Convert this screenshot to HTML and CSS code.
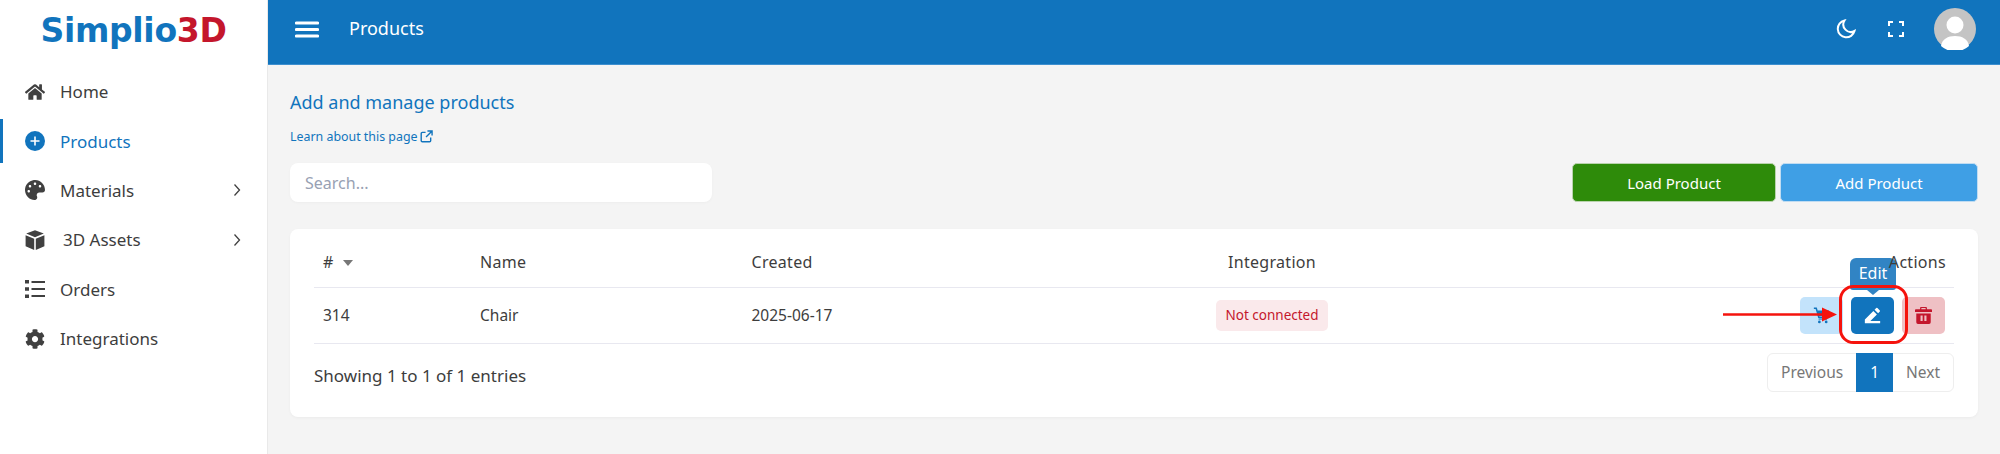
FILE: index.html
```html
<!DOCTYPE html>
<html lang="en">
<head>
<meta charset="utf-8">
<title>Products</title>
<link rel="stylesheet" href="styles.css">
</head>
<body>
<div class="app">
  <aside class="sidebar">
    <div class="logo"><span class="logo-blue">Simplio</span><span class="logo-red">3D</span></div>
    <nav class="nav">
      <a class="nav-item"><svg class="nav-icon" viewBox="0 0 576 512"><path d="M280.37 148.26L96 300.11V464a16 16 0 0 0 16 16l112.06-.29a16 16 0 0 0 15.92-16V368a16 16 0 0 1 16-16h64a16 16 0 0 1 16 16v95.64a16 16 0 0 0 16 16.05L464 480a16 16 0 0 0 16-16V300L295.67 148.26a12.19 12.19 0 0 0-15.3 0zM571.6 251.47L488 182.56V44.05a12 12 0 0 0-12-12h-56a12 12 0 0 0-12 12v72.61L318.47 43a48 48 0 0 0-61 0L4.34 251.47a12 12 0 0 0-1.6 16.9l25.5 31A12 12 0 0 0 45.15 301l235.22-193.74a12.19 12.19 0 0 1 15.3 0L530.9 301a12 12 0 0 0 16.9-1.6l25.5-31a12 12 0 0 0-1.7-16.93z"/></svg><span class="nav-label">Home</span></a>
      <a class="nav-item active"><svg class="nav-icon" viewBox="0 0 20 20"><circle cx="10" cy="10" r="10"/><path d="M10 5.5v9M5.5 10h9" stroke="#fff" stroke-width="1.6" fill="none"/></svg><span class="nav-label">Products</span></a>
      <a class="nav-item"><svg class="nav-icon" viewBox="0 0 512 512"><path d="M204.3 5C104.9 24.4 24.8 104.3 5.2 203.4c-37 187 131.7 326.4 258.8 306.7 41.2-6.4 61.4-54.6 42.5-91.7-23.1-45.4 9.9-98.4 60.9-98.4h79.7c35.8 0 64.8-29.6 64.9-65.3C511.5 97.1 368.1-26.9 204.3 5zM96 320c-17.7 0-32-14.3-32-32s14.3-32 32-32 32 14.3 32 32-14.3 32-32 32zm32-128c-17.7 0-32-14.3-32-32s14.3-32 32-32 32 14.3 32 32-14.3 32-32 32zm128-64c-17.7 0-32-14.3-32-32s14.3-32 32-32 32 14.3 32 32-14.3 32-32 32zm128 64c-17.7 0-32-14.3-32-32s14.3-32 32-32 32 14.3 32 32-14.3 32-32 32z"/></svg><span class="nav-label">Materials</span><svg class="chev" viewBox="0 0 8 14"><path d="M1.5 1.5L6.5 7l-5 5.5"/></svg></a>
      <a class="nav-item"><svg class="nav-icon" viewBox="0 0 20 20"><path d="M10 .2l8.800 3.300L10 7.300 1.200 3.500zM.6 5.200l8.600 3.600V20L.6 16.200zM19.400 5.200l-8.600 3.600V20l8.600-3.800z"/></svg><span class="nav-label assets">3D Assets</span><svg class="chev" viewBox="0 0 8 14"><path d="M1.500 1.500L6.500 7l-5 5.500"/></svg></a>
      <a class="nav-item"><svg class="nav-icon" viewBox="0 0 20 20"><path d="M0 1h4v3.500H0zM0 8.200h4v3.500H0zM0 15.500h4V19H0zM6.500 2h13.500v2H6.500zM6.500 9h13.500v2H6.500zM6.500 16h13.500v2H6.500z"/></svg><span class="nav-label">Orders</span></a>
      <a class="nav-item"><svg class="nav-icon" viewBox="0 0 512 512"><path d="M487.4 315.7l-42.6-24.6c4.3-23.2 4.3-47 0-70.2l42.6-24.6c4.9-2.8 7.1-8.6 5.5-14-11.1-35.6-30-67.8-54.7-94.6-3.8-4.1-10-5.1-14.8-2.3L380.8 110c-17.9-15.4-38.5-27.3-60.8-35.1V25.8c0-5.6-3.9-10.5-9.4-11.7-36.7-8.2-74.3-7.8-109.2 0-5.500 1.200-9.400 6.100-9.400 11.700V75c-22.200 7.900-42.800 19.800-60.800 35.100L88.700 85.500c-4.900-2.800-11-1.900-14.800 2.300-24.700 26.700-43.600 58.900-54.700 94.600-1.700 5.400.6 11.200 5.500 14L67.300 221c-4.300 23.200-4.300 47 0 70.200l-42.600 24.600c-4.900 2.800-7.100 8.600-5.500 14 11.100 35.600 30 67.800 54.700 94.600 3.800 4.100 10 5.100 14.800 2.300l42.600-24.600c17.900 15.400 38.500 27.300 60.800 35.100v49.200c0 5.600 3.900 10.500 9.400 11.700 36.700 8.200 74.300 7.800 109.200 0 5.500-1.200 9.400-6.100 9.400-11.700v-49.200c22.200-7.900 42.800-19.800 60.800-35.100l42.600 24.600c4.900 2.800 11 1.900 14.800-2.300 24.700-26.700 43.600-58.900 54.700-94.600 1.500-5.500-.7-11.300-5.600-14.100zM256 336c-44.100 0-80-35.900-80-80s35.900-80 80-80 80 35.900 80 80-35.900 80-80 80z"/></svg><span class="nav-label">Integrations</span></a>
    </nav>
  </aside>
  <div class="main">
    <header class="topbar">
      <svg class="burger" viewBox="0 0 24 17"><path d="M1.500 2h21M1.500 8.500h21M1.500 15h21"/></svg>
      <span class="topbar-title">Products</span>
      <div class="topbar-tools">
        <svg class="moon" viewBox="0 0 20 20"><path d="M8.500 1.500a8.500 8.500 0 1 0 10 10.500 7.500 7.500 0 0 1-10-10.500z"/></svg>
        <svg class="expand" viewBox="0 0 16 16"><path d="M1 5V1h4M11 1h4v4M15 11v4h-4M5 15H1v-4"/></svg>
        <svg class="avatar" viewBox="0 0 42 42"><circle cx="21" cy="21" r="21" fill="#c4c4c4"/><circle cx="21" cy="17" r="8.500" fill="#fff"/><path d="M7 38c1-7 7-10 14-10s13 3 14 10a21 21 0 0 1-28 0z" fill="#fff"/></svg>
      </div>
    </header>
    <main class="content">
      <h1 class="page-title">Add and manage products</h1>
      <a class="learn">Learn about this page <svg class="ext" viewBox="0 0 14 14"><path d="M6 2.500H2.500a1.200 1.200 0 0 0-1.200 1.200v7.800a1.200 1.200 0 0 0 1.200 1.200h7.800a1.200 1.200 0 0 0 1.200-1.200V8M8 1h5v5M13 1L6.500 7.500"/></svg></a>
      <div class="toolbar">
        <input class="search" type="text" placeholder="Search...">
        <div class="toolbar-actions">
          <button class="btn btn-load">Load Product</button>
          <button class="btn btn-add">Add Product</button>
        </div>
      </div>
      <section class="card">
        <table class="table">
          <colgroup><col class="c1"><col class="c2"><col class="c3"><col class="c4"><col class="c5"></colgroup>
          <thead>
            <tr>
              <th><span class="hash">#</span><span class="sort"></span></th>
              <th>Name</th>
              <th>Created</th>
              <th class="center">Integration</th>
              <th class="right"><span class="actions-label">Actions</span></th>
            </tr>
          </thead>
          <tbody>
            <tr>
              <td>314</td>
              <td>Chair</td>
              <td>2025-06-17</td>
              <td class="center"><span class="badge">Not connected</span></td>
              <td class="right">
                <div class="actions">
                  <button class="act act-cart"><svg viewBox="0 0 20 20"><path d="M1 1.500h2.800l3 10.500h9.500" fill="none" stroke="currentColor" stroke-width="1.800"/><path d="M5 4h14l-1.800 6.500H6.800z"/><path d="M6.500 13.500h10v1.300h-10z"/><circle cx="7.500" cy="17.500" r="1.600"/><circle cx="15.500" cy="17.500" r="1.600"/></svg></button>
                  <button class="act act-edit"><svg viewBox="0 0 20 20"><path d="M1 19v-4.200L11 4.600l4.200 4.200L7.500 16.500H19V19zM12.400 3.200l2-2a1 1 0 0 1 1.400 0l2.800 2.800a1 1 0 0 1 0 1.400l-2 2z"/></svg></button>
                  <button class="act act-del"><svg viewBox="0 0 20 20"><path d="M7 0h6a1 1 0 0 1 1 1v1.500h5a1 1 0 0 1 1 1V6H0V3.500a1 1 0 0 1 1-1h5V1a1 1 0 0 1 1-1zm.500 1.300v1.200h5V1.300zM1.500 7.500h17V18a2 2 0 0 1-2 2h-13a2 2 0 0 1-2-2zM6.500 10v6.500h2.500V10zm4.500 0v6.500h2.500V10z" fill-rule="evenodd"/></svg></button>
                  <div class="tooltip">Edit</div>
                </div>
              </td>
            </tr>
          </tbody>
        </table>
        <div class="table-foot">
          <span class="entries">Showing 1 to 1 of 1 entries</span>
          <div class="pager">
            <span class="page-link">Previous</span>
            <span class="page-link current">1</span>
            <span class="page-link">Next</span>
          </div>
        </div>
      </section>
    </main>
  </div>
</div>
<svg class="annotation" viewBox="0 0 2000 454">
  <rect x="1840.500" y="286.500" width="66" height="56" rx="13" fill="none" stroke="#f5130d" stroke-width="3"/>
  <path d="M1723 314.500h100" stroke="#f5130d" stroke-width="2.500" fill="none"/>
  <path d="M1822 307.500v14l15-7z" fill="#f5130d"/>
</svg>
</body>
</html>
```
FILE: styles.css
```css
* { box-sizing: border-box; }
html, body { margin: 0; height: 100%; }
body {
  font-family: "Noto Sans", "Open Sans", sans-serif;
  color: #3d3d3d;
  background: #f4f4f4;
  overflow: hidden;
  position: relative;
}
.app { display: flex; height: 454px; }

.sidebar {
  width: 268px;
  flex: none;
  background: #fff;
  border-right: 1px solid #e9e9e9;
}
.logo {
  height: 64px;
  padding-top: 11px;
  text-align: center;
  font-family: "DejaVu Sans", sans-serif;
  font-weight: 700;
  font-size: 33px;
  line-height: 40px;
  letter-spacing: -0.3px;
}
.logo-blue { color: #1174bd; }
.logo-red { color: #c4162c; }

.nav { padding-top: 3px; display: flex; flex-direction: column; }
.nav-item {
  height: 49.400px;
  display: flex;
  align-items: center;
  padding: 0 25px;
  font-size: 17px;
  color: #3d3d3d;
  position: relative;
}
.nav-icon { width: 20px; height: 20px; fill: #404040; flex: none; }
.nav-label { margin-left: 15px; flex: 1; }
.nav-label.assets { margin-left: 18px; }
.nav-item.active { color: #1174bd; }
.nav-item.active .nav-icon { fill: #1174bd; }
.nav-item.active::before {
  content: "";
  position: absolute;
  left: 0;
  top: 3px;
  bottom: 3px;
  width: 3px;
  background: #1174bd;
}
.chev { width: 8px; height: 14px; margin-right: 1px; fill: none; stroke: #404040; stroke-width: 1.300; }

.main { flex: 1; min-width: 0; display: flex; flex-direction: column; }
.topbar {
  height: 65px;
  flex: none;
  background: #1174bd;
  border-bottom: 1px solid #3d8fcf;
  display: flex;
  align-items: center;
  padding: 0 24px 6px 27px;
  color: #fff;
}
.burger { width: 24px; height: 17px; fill: none; stroke: #fff; stroke-width: 3.200; stroke-linecap: round; }
.topbar-title { margin-left: 30px; font-size: 18px; line-height: 20px; margin-top: -2px; }
.topbar-tools { margin-left: auto; display: flex; align-items: center; }
.moon { width: 20px; height: 20px; fill: none; stroke: #fff; stroke-width: 2; }
.expand { width: 16px; height: 16px; margin-left: 32px; fill: none; stroke: #fff; stroke-width: 2; }
.avatar { width: 42px; height: 42px; margin-left: 30px; }

.content { flex: 1; padding: 25px 22px 0; }
.page-title { margin: 0; font-size: 18px; font-weight: 400; line-height: 24px; color: #1174bd; }
.learn {
  display: flex;
  align-items: center;
  margin-top: 12px;
  height: 20px;
  font-size: 12.400px;
  color: #1174bd;
}
.ext { width: 13px; height: 13px; margin-left: 2px; fill: none; stroke: #1174bd; stroke-width: 1.500; }

.toolbar { display: flex; justify-content: space-between; align-items: center; margin-top: 17px; }
.search {
  width: 422px;
  height: 39px;
  border: 0;
  border-radius: 8px;
  background: #fff;
  padding: 0 15px;
  font: 16px "Noto Sans", sans-serif;
  box-shadow: 0 1px 3px rgba(0,0,0,.03);
  outline: none;
}
.search::placeholder { color: #98a1b3; opacity: 1; }
.toolbar-actions { display: flex; gap: 4px; }
.btn {
  height: 39px;
  border: 1px solid transparent;
  border-radius: 5px;
  color: #fff;
  font: 15px "Noto Sans", sans-serif;
  padding: 0;
}
.btn-load { width: 204px; background: #2e8b0a; border-color: #b9d3ad; }
.btn-add { width: 198px; background: #3f9fe5; border-color: #c0dcf2; }

.card {
  margin-top: 27px;
  height: 188px;
  background: #fff;
  border-radius: 8px;
  padding: 0 24px;
  box-shadow: 0 1px 3px rgba(0,0,0,.04);
  isolation: isolate;
}
.table { width: 100%; border-collapse: collapse; table-layout: fixed; font-size: 15.500px; }
.c1 { width: 157px; }
.c2 { width: 271.500px; }
.c3 { width: 432px; }
.c4 { width: 195px; }
.table th {
  height: 58px;
  font-size: 16px;
  letter-spacing: .3px;
  font-weight: 400;
  text-align: left;
  padding: 8px 9px 0;
  border-bottom: 1px solid #e8e8f0;
}
.table td {
  height: 56px;
  padding: 0 9px;
  border-bottom: 1px solid #e8e8f0;
}
.table th.center, .table td.center { text-align: center; }
.table th.right { text-align: right; padding-right: 8px; }
.actions-label { position: relative; z-index: 2; }
.sort {
  display: inline-block;
  margin-left: 9px;
  vertical-align: 2px;
  border-left: 5px solid transparent;
  border-right: 5px solid transparent;
  border-top: 6px solid #777;
}
.badge {
  display: inline-block;
  padding: 0 9px;
  height: 31px;
  line-height: 31px;
  border-radius: 5px;
  background: #fae9eb;
  color: #c4162c;
  font-size: 13.500px;
}
.actions { display: flex; justify-content: flex-end; gap: 8px; position: relative; }
.act {
  width: 43px;
  height: 37px;
  border: 0;
  border-radius: 5px;
  padding: 0;
  display: flex;
  align-items: center;
  justify-content: center;
}
.act svg { width: 17px; height: 17px; fill: currentColor; }
.act-cart { background: #c3e3fb; color: #1174bd; }
.act-edit { background: #1174bd; color: #fff; }
.act-del { background: #efc0c4; color: #c4162c; }
.tooltip {
  position: absolute;
  right: 49px;
  top: -39px;
  width: 46px;
  height: 32px;
  background: #3184c4;
  color: #fff;
  font-size: 16px;
  line-height: 30px;
  text-align: center;
  border-radius: 6px 6px 3px 3px;
  z-index: 1;
}
.tooltip::after {
  content: "";
  position: absolute;
  left: 50%;
  top: 100%;
  margin-left: -6px;
  border-left: 6px solid transparent;
  border-right: 6px solid transparent;
  border-top: 5px solid #3184c4;
}
.table-foot { display: flex; justify-content: space-between; align-items: flex-start; margin-top: 9px; }
.entries { font-size: 17px; line-height: 24px; margin-top: 11px; }
.pager {
  display: flex;
  height: 39px;
  border: 1px solid #eee;
  border-radius: 6px;
  font-size: 15.500px;
  color: #777;
  width: 187px;
}
.page-link { display: flex; align-items: center; justify-content: center; padding: 0 13px; }
.page-link.current { background: #1174bd; color: #fff; width: 38px; margin: -1px 0; padding: 0; }

.annotation { position: absolute; left: 0; top: 0; width: 2000px; height: 454px; pointer-events: none; }
```
